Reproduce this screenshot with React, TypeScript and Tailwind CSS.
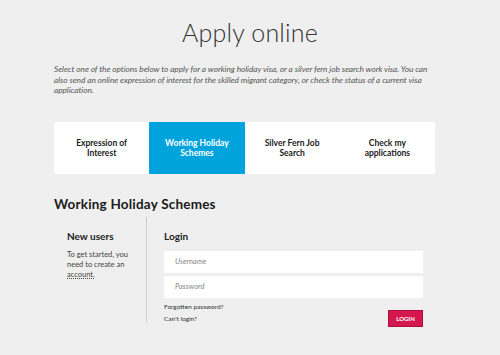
export default function App() {
  const tabs = [
    { label: 'Expression of Interest', active: false },
    { label: 'Working Holiday Schemes', active: true },
    { label: 'Silver Fern Job Search', active: false },
    { label: 'Check my applications', active: false },
  ];

  return (
    <div className="w-[500px] h-[355px] bg-[#efefef] overflow-hidden font-['Lato',sans-serif] text-[#222]">
      <h1 className="pt-[16px] text-center text-[25px] leading-[32px] font-light text-[#333] tracking-[0.2px]">
        Apply online
      </h1>

      <div className="ml-[54px] w-[381px]">
        <p className="mt-[16px] text-[8.3px] leading-[10.5px] italic text-[#555] tracking-[-0.05px]">
          Select one of the options below to apply for a working holiday visa, or a silver fern job search work visa. You can also send an online expression of interest for the skilled migrant category, or check the status of a current visa application.
        </p>

        <div className="mt-[26px] grid grid-cols-4 h-[52px] bg-white rounded-[2px]">
          {tabs.map((tab) => (
            <div
              key={tab.label}
              className={`flex items-center justify-center text-center px-[12px] text-[8.5px] leading-[10px] font-bold ${
                tab.active ? 'bg-[#00a3dc] text-white' : 'text-[#222]'
              }`}
            >
              {tab.label}
            </div>
          ))}
        </div>

        <h2 className="mt-[22px] text-[13.5px] leading-[16px] font-bold text-[#1a1a1a] tracking-[0.2px]">
          Working Holiday Schemes
        </h2>

        <div className="mt-[5px] flex">
          <div className="w-[93px] pl-[13px] pt-[12px] border-r border-[#cfcfcf] h-[106px]">
            <h3 className="text-[10px] leading-[14px] font-bold">New users</h3>
            <p className="mt-[7px] text-[7.5px] leading-[10px] text-[#444]">
              To get started, you need to create an{' '}
              <span className="underline decoration-dotted">account.</span>
            </p>
          </div>

          <div className="flex-1 pl-[17px] pr-[12px] pt-[12px]">
            <h3 className="text-[10px] leading-[14px] font-bold">Login</h3>
            <div className="mt-[8px] h-[22px] bg-white flex items-center pl-[11px] text-[7.5px] italic text-[#888]">
              Username
            </div>
            <div className="mt-[3px] h-[22px] bg-white flex items-center pl-[11px] text-[7.5px] italic text-[#888]">
              Password
            </div>
            <div className="mt-[3px] flex justify-between items-start">
              <div className="text-[6.5px] leading-[12px] text-[#333]">
                <div>Forgotten password?</div>
                <div>Can't login?</div>
              </div>
              <button className="mt-[9px] w-[35px] h-[17px] bg-[#d4184f] text-white text-[6px] font-bold border border-[#b01040]">
                LOGIN
              </button>
            </div>
          </div>
        </div>
      </div>
    </div>
  );
}
